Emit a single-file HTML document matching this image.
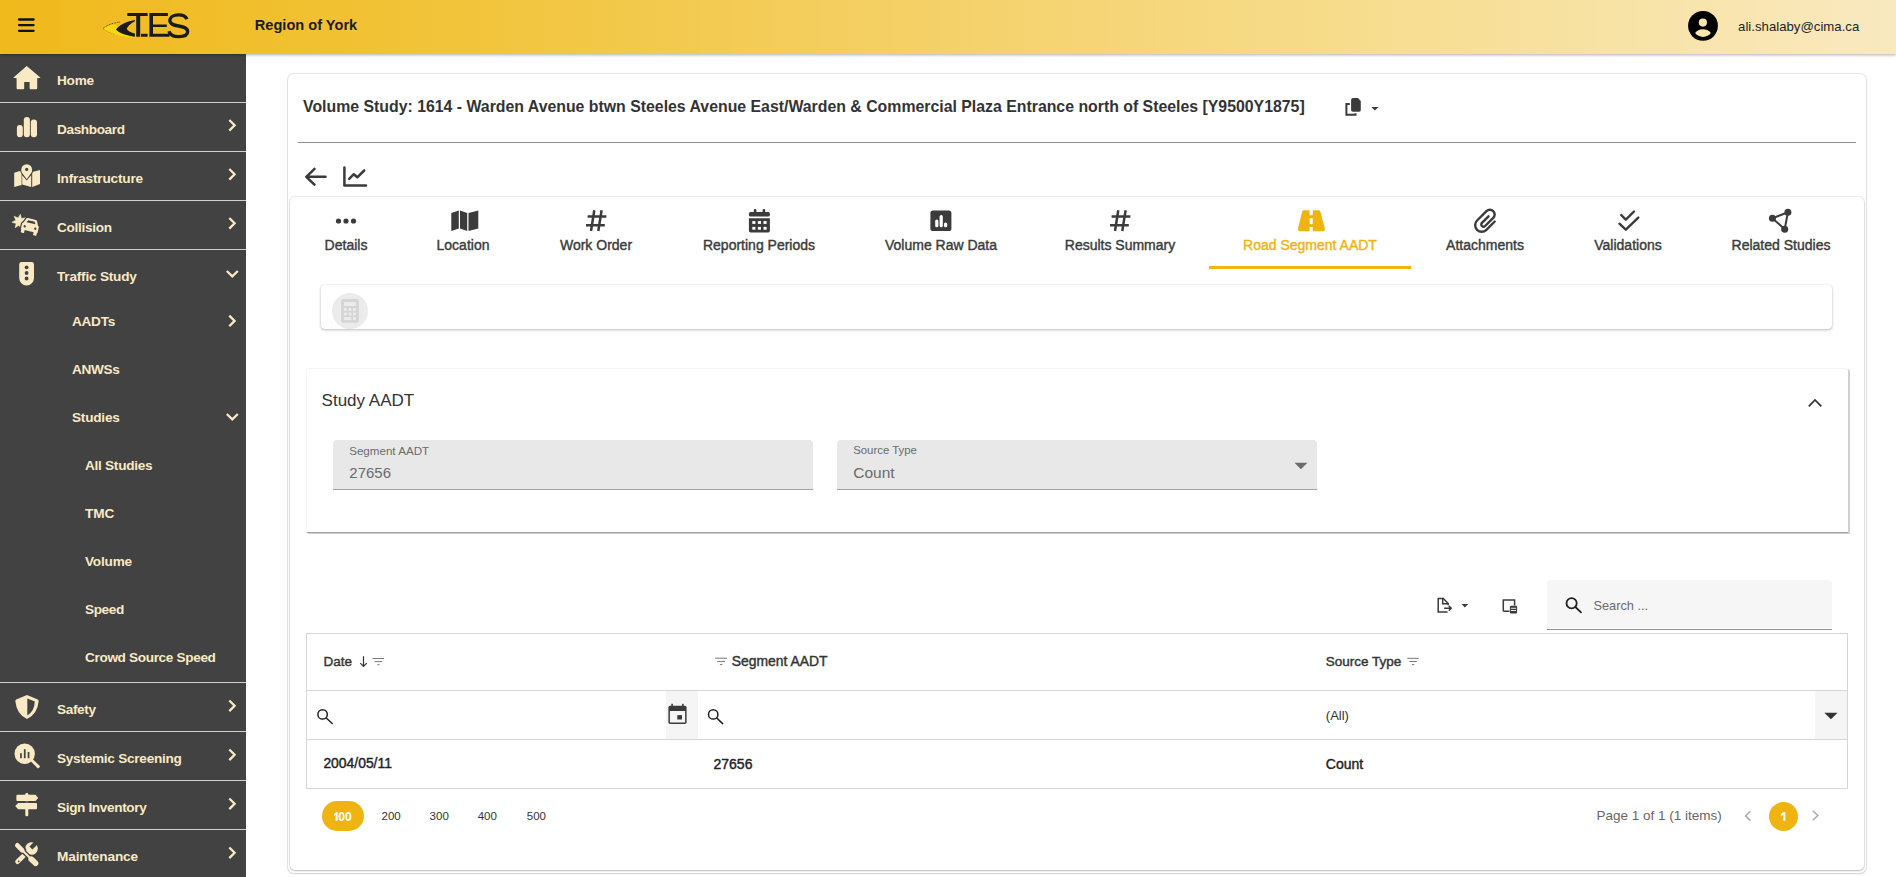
<!DOCTYPE html>
<html><head><meta charset="utf-8"><title>Volume Study</title>
<style>
*{box-sizing:border-box;margin:0;padding:0}
html,body{width:1896px;height:877px;overflow:hidden;background:#fff;font-family:"Liberation Sans",sans-serif;color:#333}
.a{position:absolute}
.t{position:absolute;white-space:nowrap}
svg{position:absolute;left:0;top:0;overflow:visible}
</style></head><body>

<div class="a" style="left:288px;top:74px;width:1578px;height:799px;border-radius:6px;background:#fff;box-shadow:0 0 1px 1px rgba(0,0,0,.10),0 1px 2px rgba(0,0,0,.10)"></div>
<div class="a" style="left:290px;top:197px;width:1574px;height:673px;border-radius:5px;background:#fff;box-shadow:0 0 1px 1px rgba(0,0,0,.08),0 1px 2px rgba(0,0,0,.2)"></div>
<div class="t" style="left:303px;top:98.88px;font-size:15.85px;line-height:15.85px;font-weight:700;color:#333;">Volume Study: 1614 - Warden Avenue btwn Steeles Avenue East/Warden &amp; Commercial Plaza Entrance north of Steeles [Y9500Y1875]</div>
<div class="a" style="left:298px;top:142px;width:1558px;height:1px;background:#8f8f8f"></div>
<div class="t" style="left:346px;transform:translateX(-50%);top:237.75px;font-size:14px;line-height:14px;font-weight:400;color:#3b3b3b;-webkit-text-stroke:0.4px #3b3b3b;">Details</div>
<div class="t" style="left:463px;transform:translateX(-50%);top:237.75px;font-size:14px;line-height:14px;font-weight:400;color:#3b3b3b;-webkit-text-stroke:0.4px #3b3b3b;">Location</div>
<div class="t" style="left:596px;transform:translateX(-50%);top:237.75px;font-size:14px;line-height:14px;font-weight:400;color:#3b3b3b;-webkit-text-stroke:0.4px #3b3b3b;">Work Order</div>
<div class="t" style="left:759px;transform:translateX(-50%);top:237.75px;font-size:14px;line-height:14px;font-weight:400;color:#3b3b3b;-webkit-text-stroke:0.4px #3b3b3b;">Reporting Periods</div>
<div class="t" style="left:941px;transform:translateX(-50%);top:237.75px;font-size:14px;line-height:14px;font-weight:400;color:#3b3b3b;-webkit-text-stroke:0.4px #3b3b3b;">Volume Raw Data</div>
<div class="t" style="left:1120px;transform:translateX(-50%);top:237.75px;font-size:14px;line-height:14px;font-weight:400;color:#3b3b3b;-webkit-text-stroke:0.4px #3b3b3b;">Results Summary</div>
<div class="t" style="left:1310px;transform:translateX(-50%);top:237.75px;font-size:14px;line-height:14px;font-weight:400;color:#efb411;-webkit-text-stroke:0.4px #efb411;">Road Segment AADT</div>
<div class="t" style="left:1485px;transform:translateX(-50%);top:237.75px;font-size:14px;line-height:14px;font-weight:400;color:#3b3b3b;-webkit-text-stroke:0.4px #3b3b3b;">Attachments</div>
<div class="t" style="left:1628px;transform:translateX(-50%);top:237.75px;font-size:14px;line-height:14px;font-weight:400;color:#3b3b3b;-webkit-text-stroke:0.4px #3b3b3b;">Validations</div>
<div class="t" style="left:1781px;transform:translateX(-50%);top:237.75px;font-size:14px;line-height:14px;font-weight:400;color:#3b3b3b;-webkit-text-stroke:0.4px #3b3b3b;">Related Studies</div>
<div class="a" style="left:1209px;top:266px;width:202px;height:3px;background:#efb411"></div>
<div class="a" style="left:321px;top:285px;width:1511px;height:44px;border-radius:4px;background:#fff;box-shadow:0 0 1px rgba(0,0,0,.2),0 1px 3px rgba(0,0,0,.25)"></div>
<div class="a" style="left:332px;top:292.5px;width:36px;height:36px;border-radius:50%;background:#ebebeb"></div>
<div class="a" style="left:306px;top:368px;width:1542px;height:165px;background:#fff;border-radius:3px 3px 0 0;border-top:1px solid #f6f6f6;border-left:1px solid #f6f6f6;border-bottom:1px solid #a2a2a2;box-shadow:2px 1px 0 #d0d0d0"></div>
<div class="t" style="left:321.6px;top:392.41px;font-size:17px;line-height:17px;font-weight:400;color:#333;">Study AADT</div>
<div class="a" style="left:333px;top:440px;width:480px;height:50px;background:#e8e8e8;border-radius:4px 4px 0 0;border-bottom:1px solid #a2a2a2"></div>
<div class="t" style="left:349.2px;top:445.18px;font-size:11.6px;line-height:11.6px;font-weight:400;color:#6b6b6b;">Segment AADT</div>
<div class="t" style="left:349.3px;top:464.50px;font-size:15px;line-height:15px;font-weight:400;color:#6b6b6b;">27656</div>
<div class="a" style="left:837px;top:440px;width:480px;height:50px;background:#e8e8e8;border-radius:4px 4px 0 0;border-bottom:1px solid #a2a2a2"></div>
<div class="t" style="left:853.2px;top:445.35px;font-size:11.4px;line-height:11.4px;font-weight:400;color:#6b6b6b;">Source Type</div>
<div class="t" style="left:853.3px;top:464.58px;font-size:15.5px;line-height:15.5px;font-weight:400;color:#6b6b6b;">Count</div>
<div class="a" style="left:1547px;top:580px;width:285px;height:48px;background:#f6f6f6;border-radius:4px 4px 0 0"></div>
<div class="a" style="left:1547px;top:629px;width:285px;height:1px;background:#919191"></div>
<div class="t" style="left:1593.4px;top:599.76px;font-size:12.8px;line-height:12.8px;font-weight:400;color:#6b6b6b;">Search ...</div>
<div class="a" style="left:306px;top:633px;width:1542px;height:156px;border:1px solid #d6d6d6"></div>
<div class="a" style="left:306px;top:690px;width:1542px;height:1px;background:#d6d6d6"></div>
<div class="a" style="left:306px;top:739px;width:1542px;height:1px;background:#d6d6d6"></div>
<div class="a" style="left:666px;top:691px;width:32px;height:48px;background:#f5f5f5"></div>
<div class="a" style="left:1815px;top:691px;width:32px;height:48px;background:#f5f5f5"></div>
<div class="t" style="left:323.6px;top:655.37px;font-size:13.5px;line-height:13.5px;font-weight:400;color:#333;-webkit-text-stroke:0.4px #333;">Date</div>
<div class="t" style="left:731.8px;top:654.83px;font-size:13.9px;line-height:13.9px;font-weight:400;color:#333;-webkit-text-stroke:0.4px #333;">Segment AADT</div>
<div class="t" style="left:1325.8px;top:655.07px;font-size:13.5px;line-height:13.5px;font-weight:400;color:#333;-webkit-text-stroke:0.4px #333;">Source Type</div>
<div class="t" style="left:1325.8px;top:709.40px;font-size:13px;line-height:13px;font-weight:400;color:#333;">(All)</div>
<div class="t" style="left:323.4px;top:757.23px;font-size:13.9px;line-height:13.9px;font-weight:400;color:#222;-webkit-text-stroke:0.4px #222;">2004/05/11</div>
<div class="t" style="left:713.5px;top:757.15px;font-size:14px;line-height:14px;font-weight:400;color:#222;-webkit-text-stroke:0.4px #222;">27656</div>
<div class="t" style="left:1325.8px;top:757.15px;font-size:14px;line-height:14px;font-weight:400;color:#222;-webkit-text-stroke:0.4px #222;">Count</div>
<div class="a" style="left:322px;top:801px;width:42px;height:30px;border-radius:15px;background:#efb411"></div>
<div class="t" style="left:338.3px;top:810.97px;font-size:12.2px;line-height:12.2px;font-weight:700;color:#fff;">00</div>
<div class="t" style="left:381.5px;top:811.27px;font-size:11.5px;line-height:11.5px;font-weight:400;color:#333;">200</div>
<div class="t" style="left:429.6px;top:811.27px;font-size:11.5px;line-height:11.5px;font-weight:400;color:#333;">300</div>
<div class="t" style="left:477.7px;top:811.27px;font-size:11.5px;line-height:11.5px;font-weight:400;color:#333;">400</div>
<div class="t" style="left:526.8px;top:811.27px;font-size:11.5px;line-height:11.5px;font-weight:400;color:#333;">500</div>
<div class="t" style="left:1596.5px;top:809.27px;font-size:13.5px;line-height:13.5px;font-weight:400;color:#666;">Page 1 of 1 (1 items)</div>
<div class="a" style="left:1769px;top:801.5px;width:29px;height:29px;border-radius:50%;background:#efb411"></div>
<svg width="1896" height="877" style="z-index:4"><path d="M334.1 814.1 L336.7 812.1 H337.6 V820.8 H335.6 V814.9 L334.1 815.9Z M1780.9 813.9 L1783.6 812.1 H1785.4 V820.8 H1783.4 V814.7 L1780.9 816Z" fill="#fff"/></svg>
<svg width="1896" height="877" viewBox="0 0 1896 877" style="z-index:3">
<g fill="none" stroke="#3b3b3b" stroke-width="2.5" stroke-linecap="round" stroke-linejoin="round">
 <!-- back arrow -->
 <path d="M325.5 176.8 H306.6 M314.5 168.9 L306.3 176.8 L314.5 184.7"/>
 <!-- chart line -->
 <path d="M344.4 167.5 V185.4 H366"/>
 <path d="M349.2 178.8 L353.8 174.2 L357.3 177.3 L364.2 170.5"/>
</g>
<!-- copy icon -->
<path d="M1353 98.1 H1358 L1360.8 100.9 V110 Q1360.8 111.7 1359.1 111.7 H1352.8 Q1351.1 111.7 1351.1 110 V100 Q1351.1 98.1 1353 98.1Z" fill="#3b3b3b"/>
<path d="M1349.8 104 H1346.4 V114.8 H1355.5 V113.2" fill="none" stroke="#3b3b3b" stroke-width="2"/>
<path d="M1371.3 107 H1378.6 L1374.95 110.6Z" fill="#3b3b3b"/>

<!-- tab icons -->
<g fill="#3b3b3b">
 <circle cx="338.5" cy="221" r="2.6"/><circle cx="346" cy="221" r="2.6"/><circle cx="353.5" cy="221" r="2.6"/>
 <path d="M451.3 213 L458.8 210.6 V228.6 L451.3 231.1Z"/>
 <path d="M460 210.6 L467.2 213.1 V231.1 L460 228.6Z"/>
 <path d="M468.5 213.1 L478.3 210.6 V228.6 L468.5 231.1Z"/>
 <rect x="748.9" y="212" width="21" height="4.6" rx="1.6"/>
 <rect x="753.8" y="209" width="2.6" height="4" rx="1"/><rect x="762.6" y="209" width="2.6" height="4" rx="1"/>
 <path d="M748.9 218.2 H769.9 V230.8 Q769.9 232.6 768.1 232.6 H750.7 Q748.9 232.6 748.9 230.8Z"/>
 <rect x="930.4" y="210.5" width="21" height="20.5" rx="2.6"/>
 <path d="M1303.4 210.3 H1309.6 V215.2 H1312.8 V210.3 H1318.9 Q1320 210.5 1320.5 212 L1324.8 228.5 Q1325.2 231.3 1322.5 231.3 H1312.8 V227 H1309.6 V231.3 H1300 Q1297.5 231.3 1298 228.5 L1302 212 Q1302.4 210.5 1303.4 210.3Z" fill="#efb411"/>
 <rect x="1309.7" y="218.3" width="3" height="5.8" fill="#fff"/>
</g>
<g fill="#fff">
 <rect x="752.3" y="221.1" width="3.1" height="2.8"/><rect x="757.9" y="221.1" width="3.1" height="2.8"/><rect x="763.5" y="221.1" width="3.1" height="2.8"/>
 <rect x="752.3" y="226.9" width="3.1" height="2.8"/><rect x="757.9" y="226.9" width="3.1" height="2.8"/><rect x="763.5" y="226.9" width="3.1" height="2.8"/>
 <rect x="935.2" y="219.6" width="3.2" height="7.6" rx="1.5"/>
 <rect x="939.6" y="215" width="3.2" height="12.2" rx="1.5"/>
 <rect x="944" y="222.4" width="3.2" height="4.8" rx="1.5"/>
</g>
<g fill="none" stroke="#3b3b3b" stroke-width="2.5" stroke-linecap="butt">
 <path d="M587.6 216.4 H606.4 M586 225.3 H604.8 M594.3 210.3 L591 231 M601.6 210.3 L598.3 231"/>
 <path d="M1111.6 216.4 H1130.4 M1110 225.3 H1128.8 M1118.3 210.3 L1115 231 M1125.6 210.3 L1122.3 231"/>
</g>
<g fill="none" stroke="#3b3b3b" stroke-width="2.4" stroke-linecap="round" stroke-linejoin="round">
 <path transform="translate(1485.8 221.1) rotate(45)" d="M6.6 -6 V5.75 A6.6 6.6 0 0 1 -6.6 5.75 V-7.55 A4.8 4.8 0 0 1 3 -7.55 V3.95 A2.25 2.25 0 0 1 -1.5 3.95 V-5.3"/>
 <path d="M1621.3 215.1 L1625.8 219.6 L1634 211.5"/>
 <path d="M1619.4 223.7 L1625.8 229.7 L1638.3 217.6"/>
 <path d="M1787.9 212.3 L1772.4 218.2 L1784.7 229.2 Z" stroke-width="2"/>
</g>
<g fill="#3b3b3b">
 <circle cx="1787.9" cy="212.3" r="3.5"/><circle cx="1772.4" cy="218.2" r="3.5"/><circle cx="1784.7" cy="229.2" r="3.5"/>
</g>

<!-- calculator -->
<g fill="#d5d5d5">
 <path d="M343.3 299.1 H356.6 Q358.8 299.1 358.8 301.3 V320.6 Q358.8 322.8 356.6 322.8 H343.3 Q341.1 322.8 341.1 320.6 V301.3 Q341.1 299.1 343.3 299.1Z"/>
</g>
<g fill="#ececec">
 <rect x="343.9" y="302" width="12" height="4" rx="1"/>
 <rect x="343.9" y="308" width="3" height="3" rx="1"/><rect x="348.5" y="308" width="3" height="3" rx="1"/><rect x="352.9" y="308" width="3" height="3" rx="1"/>
 <rect x="343.9" y="312.5" width="3" height="3" rx="1"/><rect x="348.5" y="312.5" width="3" height="3" rx="1"/><rect x="352.9" y="312.5" width="3" height="3" rx="1"/>
 <rect x="343.9" y="317" width="7.5" height="3" rx="1"/><rect x="352.9" y="317" width="3" height="3" rx="1"/>
</g>

<!-- collapse chevron -->
<path d="M1808.8 406.3 L1815 400 L1821.3 406.3" fill="none" stroke="#333" stroke-width="1.7"/>
<!-- select triangle -->
<path d="M1294.5 462.8 H1307.4 L1300.95 469.2Z" fill="#6b6b6b"/>

<!-- export icon -->
<g fill="none" stroke="#3b3b3b" stroke-width="1.5">
 <path d="M1447.6 612 H1438.2 V598.6 H1443.3 L1448.2 603.6 V605.3"/>
 <path d="M1442.7 598.6 V603.8 H1448.2"/>
 <path d="M1444.2 608.2 H1451 M1448.8 605.9 L1451.2 608.2 L1448.8 610.5"/>
 <path d="M1503.3 611.2 V599.9 H1514.6 V605.5 M1503.3 611.2 H1509.5"/>
</g>
<path d="M1461.5 604.1 H1468.2 L1464.85 607.4Z" fill="#3b3b3b"/>
<rect x="1509.9" y="605.8" width="7.2" height="7.6" rx="1.2" fill="#3b3b3b"/>
<g fill="#fff"><rect x="1510.9" y="607.8" width="5.2" height="0.9"/><rect x="1510.9" y="610" width="5.2" height="0.9"/></g>

<!-- search icons -->
<g fill="none" stroke="#222" stroke-width="1.8" stroke-linecap="round">
 <circle cx="1571.6" cy="603.2" r="5.1"/><path d="M1575.4 607 L1581 612.4"/>
</g>
<g fill="none" stroke="#222" stroke-width="1.5" stroke-linecap="round">
 <circle cx="322.6" cy="714.4" r="4.7"/><path d="M326.2 718 L332.2 723.5"/>
 <circle cx="713.2" cy="714.4" r="4.7"/><path d="M716.8 718 L722.6 723.6"/>
</g>
<!-- calendar small -->
<g fill="#3b3b3b">
 <path d="M670.2 705.7 H684.8 Q686.6 705.7 686.6 707.5 V722.2 Q686.6 724 684.8 724 H670.2 Q668.4 724 668.4 722.2 V707.5 Q668.4 705.7 670.2 705.7Z"/>
 <rect x="671.3" y="703.8" width="1.6" height="3"/><rect x="682.1" y="703.8" width="1.6" height="3"/>
</g>
<rect x="669.9" y="711" width="15.2" height="11.5" fill="#f5f5f5"/>
<rect x="677.3" y="715.1" width="4.7" height="4.4" fill="#3b3b3b"/>
<!-- filter row dropdown -->
<path d="M1824.3 712.7 H1837.6 L1830.95 719.2Z" fill="#333"/>

<!-- header filter icons -->
<g stroke="#777" stroke-width="1">
 <path d="M372.7 658.5 H384.1 M374.7 661.6 H382 M377.3 664.7 H379.5"/>
 <path d="M715.1 658.2 H727 M717.2 661.4 H725 M719.9 664.6 H722.3"/>
 <path d="M1407.3 658.3 H1418.8 M1409.4 661.5 H1416.8 M1412 664.6 H1414.3"/>
</g>
<!-- sort arrow -->
<path d="M363.5 656.3 V666.3 M360.3 663.2 L363.5 666.5 L366.7 663.2" fill="none" stroke="#333" stroke-width="1.2"/>

<!-- pager arrows -->
<g fill="none" stroke="#aaa" stroke-width="1.5">
 <path d="M1750.4 811.2 L1745.6 815.9 L1750.4 820.6"/>
 <path d="M1812.8 810.8 L1817.8 815.5 L1812.8 820.2"/>
</g>
</svg>

<div class="a" style="left:0;top:0;width:1896px;height:54px;z-index:8;background:linear-gradient(90deg,#f0b91c 0%,#f2c43a 24%,#f4d066 48%,#f7de93 75%,#f9e9c0 100%);box-shadow:0 1px 3px rgba(0,0,0,.32)">
<svg width="1896" height="54" viewBox="0 0 1896 54">
 <g stroke="#111" stroke-width="2.3" stroke-linecap="round"><path d="M19 19.5 H33.6 M19 25.1 H33.6 M19 30.8 H33.6"/></g>
 <!-- logo -->
 <path d="M103 28.6 C106 26.2 110 24.8 114.5 24.4 C117 25 117.5 27.5 116 29.6 C120 33.2 127 35.8 135 36.7 L135 37.8 C122 37.4 110 33.8 103 28.6 Z" fill="#f6d712"/>
 <path d="M103.2 28.4 C106.5 25.3 112 23 120.5 22" fill="none" stroke="#3a3000" stroke-width=".9" stroke-dasharray="1 .7" opacity=".85"/>
 <path d="M103.2 28.8 C106 31 110 33 115 34.3" fill="none" stroke="#4a3d00" stroke-width=".6" stroke-dasharray=".8 1" opacity=".6"/>
 <path d="M116 29.6 C119 25 126 21.5 134.9 19.9 L134.9 21.2 C130.5 23.5 127.5 26.5 126.7 29 C128 31 131 32.5 134.9 33.5 L134.9 36.7 C126 35.8 119 33 116 29.6 Z" fill="#1b1b1b"/>
 <path d="M127.3 13 H147.6 V15.9 H140.2 V36.7 H136.2 V15.9 H127.3Z" fill="#1b1b1b"/>
 <rect x="141" y="33.8" width="6.6" height="2.9" fill="#1b1b1b"/>
 <path d="M149.4 13 H167.9 V16 H153 V24.4 H166.8 V27 H153 V33.8 H169.5 V36.7 H149.4Z" fill="#1b1b1b"/>
 <path d="M187 19.2 C185.6 15.9 182.2 14.8 178.6 14.8 C173.6 14.8 169.9 16.9 169.9 20.6 C169.9 24.4 174 25.2 178.6 26 C183.6 26.8 187.7 27.9 187.7 31.5 C187.7 35.3 183.6 36.6 178.6 36.6 C173.6 36.6 170 34.6 168.9 31.2" fill="none" stroke="#1b1b1b" stroke-width="3.3"/>
 <!-- avatar -->
 <circle cx="1703" cy="25.85" r="14.9" fill="#000"/>
 <circle cx="1702.9" cy="22.6" r="4.1" fill="#f8e4b0"/>
 <path d="M1695.1 33.1 Q1697.5 29.3 1703 29.3 Q1708.5 29.3 1710.9 33.1 Q1708 36.9 1703 36.9 Q1698 36.9 1695.1 33.1Z" fill="#f8e4b0"/>
</svg>
</div>
<div class="a" style="left:0;top:0;width:1896px;height:54px;z-index:9">
<div class="t" style="left:254.8px;top:18.44px;font-size:14.6px;line-height:14.6px;font-weight:700;color:#1b1b1b;">Region of York</div>
<div class="t" style="left:1738.1px;top:19.53px;font-size:13.2px;line-height:13.2px;font-weight:400;color:#1e1e1e;">ali.shalaby@cima.ca</div>
</div>
<div class="a" style="left:0;top:54px;width:246px;height:823px;background:#424242;z-index:6"></div>
<div class="a" style="left:0;top:0;width:246px;height:877px;z-index:7">
<div class="a" style="left:0px;top:102px;width:246px;height:1px;background:#cfcfcf"></div>
<div class="a" style="left:0px;top:151px;width:246px;height:1px;background:#cfcfcf"></div>
<div class="a" style="left:0px;top:200px;width:246px;height:1px;background:#cfcfcf"></div>
<div class="a" style="left:0px;top:249px;width:246px;height:1px;background:#cfcfcf"></div>
<div class="a" style="left:0px;top:682px;width:246px;height:1px;background:#cfcfcf"></div>
<div class="a" style="left:0px;top:731px;width:246px;height:1px;background:#cfcfcf"></div>
<div class="a" style="left:0px;top:780px;width:246px;height:1px;background:#cfcfcf"></div>
<div class="a" style="left:0px;top:829px;width:246px;height:1px;background:#cfcfcf"></div>
<div class="t" style="left:57px;top:74.09px;font-size:13.6px;line-height:13.6px;font-weight:700;color:#f9eac5;letter-spacing:-0.203px;">Home</div>
<div class="t" style="left:57px;top:123.09px;font-size:13.6px;line-height:13.6px;font-weight:700;color:#f9eac5;letter-spacing:-0.375px;">Dashboard</div>
<div class="t" style="left:57px;top:172.09px;font-size:13.6px;line-height:13.6px;font-weight:700;color:#f9eac5;letter-spacing:-0.171px;">Infrastructure</div>
<div class="t" style="left:57px;top:221.09px;font-size:13.6px;line-height:13.6px;font-weight:700;color:#f9eac5;letter-spacing:-0.299px;">Collision</div>
<div class="t" style="left:57px;top:270.09px;font-size:13.6px;line-height:13.6px;font-weight:700;color:#f9eac5;letter-spacing:-0.206px;">Traffic Study</div>
<div class="t" style="left:57px;top:703.09px;font-size:13.6px;line-height:13.6px;font-weight:700;color:#f9eac5;letter-spacing:-0.368px;">Safety</div>
<div class="t" style="left:57px;top:752.09px;font-size:13.6px;line-height:13.6px;font-weight:700;color:#f9eac5;letter-spacing:-0.253px;">Systemic Screening</div>
<div class="t" style="left:57px;top:801.09px;font-size:13.6px;line-height:13.6px;font-weight:700;color:#f9eac5;letter-spacing:-0.358px;">Sign Inventory</div>
<div class="t" style="left:57px;top:850.09px;font-size:13.6px;line-height:13.6px;font-weight:700;color:#f9eac5;letter-spacing:-0.128px;">Maintenance</div>
<div class="t" style="left:72px;top:315.09px;font-size:13.6px;line-height:13.6px;font-weight:700;color:#f9eac5;letter-spacing:-0.262px;">AADTs</div>
<div class="t" style="left:72px;top:363.09px;font-size:13.6px;line-height:13.6px;font-weight:700;color:#f9eac5;letter-spacing:-0.308px;">ANWSs</div>
<div class="t" style="left:72px;top:411.09px;font-size:13.6px;line-height:13.6px;font-weight:700;color:#f9eac5;letter-spacing:-0.207px;">Studies</div>
<div class="t" style="left:85px;top:459.09px;font-size:13.6px;line-height:13.6px;font-weight:700;color:#f9eac5;letter-spacing:-0.269px;">All Studies</div>
<div class="t" style="left:85px;top:507.09px;font-size:13.6px;line-height:13.6px;font-weight:700;color:#f9eac5;letter-spacing:-0.065px;">TMC</div>
<div class="t" style="left:85px;top:555.09px;font-size:13.6px;line-height:13.6px;font-weight:700;color:#f9eac5;letter-spacing:-0.186px;">Volume</div>
<div class="t" style="left:85px;top:603.09px;font-size:13.6px;line-height:13.6px;font-weight:700;color:#f9eac5;letter-spacing:-0.373px;">Speed</div>
<div class="t" style="left:85px;top:651.09px;font-size:13.6px;line-height:13.6px;font-weight:700;color:#f9eac5;letter-spacing:-0.342px;">Crowd Source Speed</div>
</div>
<svg width="246" height="877" viewBox="0 0 246 877" style="z-index:8">
<g fill="#f9eac5">
 <path d="M26.7 66 L40.6 77.8 L37.2 78.2 L37.2 88 Q37.2 89.2 36 89.2 L30.6 89.2 Q29.6 89.2 29.6 88.2 L29.6 82 L24.2 82 L24.2 88.2 Q24.2 89.2 23.2 89.2 L17.8 89.2 Q16.6 89.2 16.6 88 L16.6 78.2 L13.2 77.8 Z"/>
 <rect x="16.9" y="124.9" width="5.9" height="12.3" rx="2.9"/>
 <rect x="23.8" y="116.9" width="6.1" height="20.3" rx="3"/>
 <rect x="30.8" y="119.6" width="6.2" height="17.6" rx="3"/>
 <path d="M14.2 172.8 L21.6 170.6 L21.6 184.9 L14.2 187 Z"/>
 <path d="M22.2 175.3 L26.7 180 L31.2 175.3 L31.2 187 L22.2 184.4 Z"/>
 <path d="M32.2 172.1 L40 170 L40 184 L32.2 187 Z"/>
 <path d="M26.7 180.6 L20.9 172.8 Q19.9 171 20 169.3 A6.7 6.7 0 0 1 33.4 169.3 Q33.5 171 32.5 172.8 Z" fill="#424242"/>
 <path d="M26.7 179.2 L21.8 172.6 Q21.2 171.3 21.3 169.6 A5.4 5.4 0 0 1 32.1 169.6 Q32.2 171.3 31.6 172.6 Z"/>
 <circle cx="26.7" cy="169.4" r="1.6" fill="#424242"/>
 <path d="M20.33 214.27 L21.35 218.52 L25.67 217.84 L22.99 221.29 L26.22 224.23 L21.84 224.29 L21.55 228.65 L18.79 225.26 L15.19 227.76 L16.11 223.48 L11.93 222.23 L15.84 220.28 L14.21 216.23 L18.17 218.08Z" stroke="#f9eac5" stroke-width="0.6" stroke-linejoin="round"/>
 <g transform="translate(30 227.4) rotate(13)">
  <path d="M-4 -8.6 H4 Q5.2 -8.6 5.6 -7.5 L7.4 -3.3 Q8.6 -3.1 8.6 -1.8 V3.8 H8 V6.2 Q8 6.9 7.3 6.9 H5.3 Q4.6 6.9 4.6 6.2 V3.8 H-4.6 V6.2 Q-4.6 6.9 -5.3 6.9 H-7.3 Q-8 6.9 -8 6.2 V3.8 H-8.6 V-1.8 Q-8.6 -3.1 -7.4 -3.3 L-5.6 -7.5 Q-5.2 -8.6 -4 -8.6Z" fill="#424242" stroke="#424242" stroke-width="2.4" stroke-linejoin="round"/>
  <path d="M-4 -8.6 H4 Q5.2 -8.6 5.6 -7.5 L7.4 -3.3 Q8.6 -3.1 8.6 -1.8 V3.8 H8 V6.2 Q8 6.9 7.3 6.9 H5.3 Q4.6 6.9 4.6 6.2 V3.8 H-4.6 V6.2 Q-4.6 6.9 -5.3 6.9 H-7.3 Q-8 6.9 -8 6.2 V3.8 H-8.6 V-1.8 Q-8.6 -3.1 -7.4 -3.3 L-5.6 -7.5 Q-5.2 -8.6 -4 -8.6Z"/>
  <path d="M-3.3 -6.6 H3.3 L4.6 -4.2 H-4.6Z" fill="#424242"/>
  <circle cx="-5.4" cy="0.1" r="1.15" fill="#424242"/>
  <circle cx="5.4" cy="0.1" r="1.15" fill="#424242"/>
 </g>
 <path d="M21.6 262.1 L31.6 262.1 Q34 262.1 34 264.5 L34 278 A7.4 7.4 0 0 1 19.2 278 L19.2 264.5 Q19.2 262.1 21.6 262.1 Z"/>
 <circle cx="26.6" cy="267.3" r="1.9" fill="#424242"/>
 <circle cx="26.6" cy="273" r="1.9" fill="#424242"/>
 <circle cx="26.6" cy="278.5" r="1.9" fill="#424242"/>
 <path d="M27 695 L37.8 699.5 Q38.8 700 38.6 701.5 Q37.5 714 27 719 Q16.5 714 15.4 701.5 Q15.2 700 16.2 699.5 Z"/>
 <path d="M27.3 698.6 L34.8 701.6 Q34.4 711.5 27.3 715.4 Z" fill="#424242"/>
 <circle cx="24.7" cy="753.8" r="10.2"/>
 <path d="M30.5 761 L32.5 759 L39.6 765.8 Q40.2 766.6 39.5 767.3 L38.9 767.9 Q38.2 768.5 37.4 767.9 Z"/>
 <rect x="20.1" y="753.2" width="1.7" height="5" fill="#424242"/>
 <rect x="23.9" y="749.2" width="1.7" height="9" fill="#424242"/>
 <rect x="27.7" y="752" width="1.7" height="6.2" fill="#424242"/>
 <rect x="25.3" y="793" width="3" height="23.2" rx="1.2"/>
 <path d="M17.4 794.8 L35.5 794.8 L38.2 797.9 L35.5 801 L17.4 801 Q16.4 801 16.4 800 L16.4 795.8 Q16.4 794.8 17.4 794.8 Z"/>
 <path d="M18.2 803 L36 803 Q37 803 37 804 L37 808.2 Q37 809.2 36 809.2 L18.2 809.2 L15.2 806.1 Z"/>
 <rect x="16" y="801.2" width="22" height="1.6" fill="#424242"/>
 <!-- wrench -->
 <path d="M26.8 852.6 L17.6 861.6" stroke="#f9eac5" stroke-width="4.8" stroke-linecap="round"/>
 <circle cx="31.5" cy="848.5" r="6.3"/>
 <path d="M29.4 846.6 L32.4 849.6 L39.5 842.5 L36.5 839.5Z" fill="#424242"/>
 <circle cx="18.7" cy="861.3" r="0.9" fill="#424242"/>
 <!-- screwdriver -->
 <g stroke="#424242" stroke-linecap="round" fill="none">
  <path d="M17.3 845.3 L22.3 850.3" stroke-width="7.6"/>
  <path d="M22.3 850.3 L30 858" stroke-width="4.6"/>
  <path d="M31.2 859.1 L35.6 863.3" stroke-width="8.4"/>
 </g>
 <g stroke="#f9eac5" stroke-linecap="round" fill="none">
  <path d="M17.3 845.3 L22.3 850.3" stroke-width="4.6"/>
  <path d="M22.3 850.3 L30 858" stroke-width="2"/>
  <path d="M31.2 859.1 L35.6 863.3" stroke-width="5.6"/>
 </g>
</g>
<g fill="none" stroke="#f9eac5" stroke-width="2.3">
 <path d="M229.3 120 L234.6 125.3 L229.3 130.6"/>
 <path d="M229.3 169 L234.6 174.3 L229.3 179.6"/>
 <path d="M229.3 218 L234.6 223.3 L229.3 228.6"/>
 <path d="M226.8 271 L232.3 276.3 L237.8 271"/>
 <path d="M229.3 315.6 L234.6 320.9 L229.3 326.2"/>
 <path d="M226.8 414 L232.3 419.3 L237.8 414"/>
 <path d="M229.3 700.5 L234.6 705.8 L229.3 711.1"/>
 <path d="M229.3 749.5 L234.6 754.8 L229.3 760.1"/>
 <path d="M229.3 798.5 L234.6 803.8 L229.3 809.1"/>
 <path d="M229.3 847.5 L234.6 852.8 L229.3 858.1"/>
</g>
</svg>

</body></html>
